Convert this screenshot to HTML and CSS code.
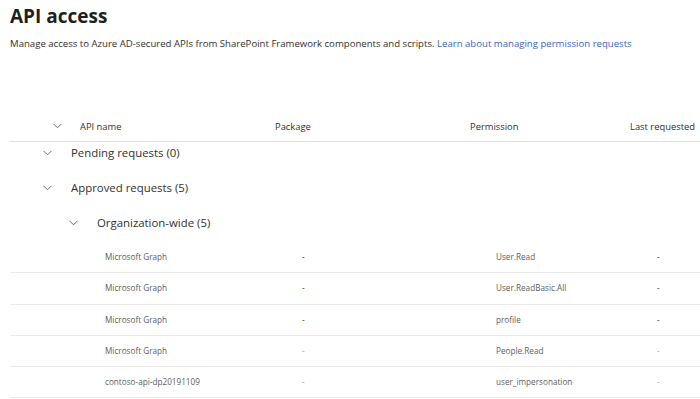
FILE: index.html
```html
<!DOCTYPE html>
<html lang="en">
<head>
    <meta charset="UTF-8">
    <meta name="viewport" content="width=device-width, initial-scale=1.0">
    <title>API access</title>
    <link rel="stylesheet" href="styles.css">
</head>
<body>

<div class="page">
    <h1 class="title">API access</h1>
    <p class="intro">Manage access to Azure AD-secured APIs from SharePoint Framework components and scripts. <a href="#" class="link">Learn about managing permission requests</a></p>

    <div class="list">
        <div class="list-header">
            <div class="cell-toggle">
                <svg class="chevron" width="9" height="6" viewBox="0 0 9 6"><path d="M0.5 0.8 L4.5 4.8 L8.5 0.8" /></svg>
            </div>
            <div>API name</div>
            <div>Package</div>
            <div>Permission</div>
            <div>Last requested</div>
        </div>

        <div class="group group-top group-first">
            <svg class="chevron" width="9" height="6" viewBox="0 0 9 6"><path d="M0.5 0.8 L4.5 4.8 L8.5 0.8" /></svg>
            <span>Pending requests (0)</span>
        </div>
        <div class="group group-top">
            <svg class="chevron" width="9" height="6" viewBox="0 0 9 6"><path d="M0.5 0.8 L4.5 4.8 L8.5 0.8" /></svg>
            <span>Approved requests (5)</span>
        </div>
        <div class="group group-sub">
            <svg class="chevron" width="9" height="6" viewBox="0 0 9 6"><path d="M0.5 0.8 L4.5 4.8 L8.5 0.8" /></svg>
            <span>Organization-wide (5)</span>
        </div>

        <div class="row">
            <div>Microsoft Graph</div>
            <div class="dash">-</div>
            <div>User.Read</div>
            <div class="dash">-</div>
        </div>
        <div class="row">
            <div>Microsoft Graph</div>
            <div class="dash">-</div>
            <div>User.ReadBasic.All</div>
            <div class="dash">-</div>
        </div>
        <div class="row">
            <div>Microsoft Graph</div>
            <div class="dash">-</div>
            <div>profile</div>
            <div class="dash">-</div>
        </div>
        <div class="row">
            <div>Microsoft Graph</div>
            <div class="dash light">-</div>
            <div>People.Read</div>
            <div class="dash light">-</div>
        </div>
        <div class="row">
            <div>contoso-api-dp20191109</div>
            <div class="dash light">-</div>
            <div>user_impersonation</div>
            <div class="dash light">-</div>
        </div>
    </div>
</div>

</body>
</html>
```

FILE: styles.css
```css
* {
    margin: 0;
    padding: 0;
    box-sizing: border-box;
}

body {
    background: #fff;
    font-family: 'Open Sans', 'Noto Sans', sans-serif;
    color: #323130;
    overflow: hidden;
}

.page {
    padding-left: 10px;
}

.title {
    font-size: 19px;
    font-weight: 700;
    line-height: 26px;
    padding-top: 3px;
    color: #201f1e;
}

.intro {
    font-size: 9.6px;
    line-height: 14px;
    margin-top: 8px;
}

.link {
    color: #3b66c2;
    text-decoration: none;
}

.list {
    margin-top: 60px;
}

.list-header {
    display: grid;
    grid-template-columns: 70px 195px 195px 160px 1fr;
    align-items: center;
    height: 31px;
    border-bottom: 1px solid #e1dfdd;
    font-size: 9.4px;
    white-space: nowrap;
}

.cell-toggle {
    padding-left: 43px;
    display: flex;
    align-items: center;
}

.chevron {
    fill: none;
    stroke: #605e5c;
    stroke-width: 0.9;
}

.group {
    display: flex;
    align-items: center;
    height: 24px;
    padding-bottom: 3px;
    margin-top: 11px;
    font-size: 11.4px;
}

.group-first {
    margin-top: 0;
}

.group-top {
    padding-left: 33px;
}

.group-sub {
    padding-left: 59px;
}

.group .chevron {
    margin-right: 19px;
}

/* data rows sit one indent level deeper than the header columns */
.row {
    display: grid;
    grid-template-columns: 95px 197px 194px 161px 1fr;
    align-items: center;
    height: 31.3px;
    padding-bottom: 1px;
    border-bottom: 1px solid #edebe9;
    font-size: 8.2px;
    color: #605e5c;
}

.group-sub + .row {
    margin-top: 6px;
}

.row > div:nth-child(1) {
    grid-column: 2;
}

.row > div:nth-child(2) {
    grid-column: 3;
}

.row > div:nth-child(3) {
    grid-column: 4;
}

.row > div:nth-child(4) {
    grid-column: 5;
}

.dash {
    color: #323130;
}

.dash.light {
    color: #a19f9d;
}
```
